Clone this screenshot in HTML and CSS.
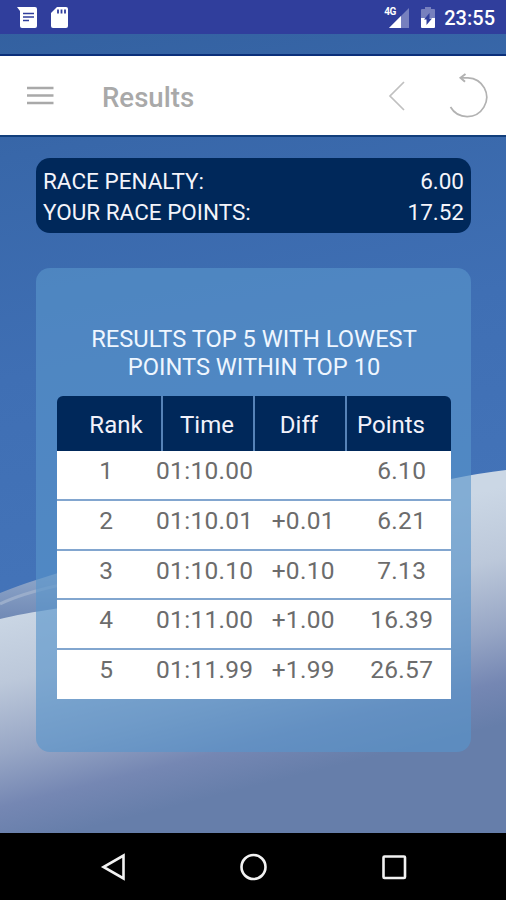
FILE: index.html
```html
<!DOCTYPE html>
<html lang="en">
<head>
  <meta charset="UTF-8">
  <meta name="viewport" content="width=device-width, initial-scale=1.0">
  <title>Results</title>
  <link rel="stylesheet" href="styles.css">
</head>
<body>
  <div class="screen">
    <!-- sky and snow -->
    <svg class="backdrop" viewBox="0 0 506 900" preserveAspectRatio="none">
      <defs>
        <linearGradient id="sky" x1="0" y1="0" x2="0.15" y2="1">
          <stop offset="0" stop-color="#325f9e"/>
          <stop offset=".25" stop-color="#3867a9"/>
          <stop offset=".6" stop-color="#3f6fb4"/>
          <stop offset="1" stop-color="#4474b9"/>
        </linearGradient>
        <linearGradient id="snow" gradientUnits="userSpaceOnUse" x1="0" y1="612" x2="56" y2="836">
          <stop offset="0" stop-color="#cbd7e5"/>
          <stop offset=".3" stop-color="#bcc8da"/>
          <stop offset=".6" stop-color="#97a6c5"/>
          <stop offset=".82" stop-color="#7587b3"/>
          <stop offset="1" stop-color="#667eaa"/>
        </linearGradient>
        <linearGradient id="ridge" x1="0" y1="0" x2="0" y2="1">
          <stop offset="0" stop-color="#93abcd"/>
          <stop offset="1" stop-color="#7089b5"/>
        </linearGradient>
      </defs>
      <rect width="506" height="620" fill="url(#sky)"/>
      <path d="M0 593 Q20 585 36 580 L80 566 V620 H0z" fill="url(#ridge)"/>
      <path d="M0 604 Q20 594 60 585" fill="none" stroke="#9aadcb" stroke-width="3"/>
      <path d="M0 619 Q20 614 60 608 Q300 510 451 479 Q480 473 506 470 V840 H0z" fill="url(#snow)"/>
    </svg>

    <div class="statusbar">
      <svg class="icon-message" width="20" height="21" viewBox="0 0 20 21">
        <path d="M0 0h18q2 0 2 2v17q0 2-2 2H5q-2 0-2-2V4z" fill="#fff"/>
        <path d="M6 6.5h11M6 10h11M6 13.5h6" stroke="#303e9c" stroke-width="1.5"/>
      </svg>
      <svg class="icon-sd" width="17" height="21" viewBox="0 0 17 21">
        <path d="M6 0h9q2 0 2 2v17q0 2-2 2H2q-2 0-2-2V6z" fill="#fff"/>
        <path d="M7 2.5v4M10.5 2.5v4M14 2.5v4" stroke="#303e9c" stroke-width="1.8"/>
      </svg>
      <div class="signal">
        <span class="network">4G</span>
        <svg width="20" height="20" viewBox="0 0 20 20">
          <path d="M20 0v20H0z" fill="#7780be"/>
          <path d="M12 8v12H0z" fill="#fff"/>
        </svg>
      </div>
      <svg class="icon-battery" width="14" height="21" viewBox="0 0 14 21">
        <path d="M4 0h6v2h3q1 0 1 1v8H0V3q0-1 1-1h3z" fill="#7780be"/>
        <path d="M0 11h14v9q0 1-1 1H1q-1 0-1-1z" fill="#fff"/>
        <path d="M8.5 6v5.5H11L5.5 18v-5.5H3z" fill="#303e9c"/>
      </svg>
      <span class="clock">23:55</span>
    </div>

    <header class="toolbar">
      <svg class="icon-menu" width="27" height="19" viewBox="0 0 27 19">
        <path d="M0 2h26.5M0 9.5h26.5M0 17h26.5" stroke="#a9a9a9" stroke-width="2.4"/>
      </svg>
      <h1>Results</h1>
      <svg class="icon-back" width="18" height="32" viewBox="0 0 18 32">
        <path d="M16 2L2 16l14 14" fill="none" stroke="#c0c0c0" stroke-width="1.7"/>
      </svg>
      <svg class="icon-reload" width="42" height="46" viewBox="0 0 42 46">
        <path d="M14 4.8H20A19.4 19.4 0 1 1 2.5 34" fill="none" stroke="#b2b2b2" stroke-width="1.7"/>
        <path d="M17.5 1l-5 3.8 4.5 4" fill="none" stroke="#b2b2b2" stroke-width="2"/>
      </svg>
    </header>

    <main>
      <div class="summary">
        <div class="line"><span>RACE PENALTY:</span><span>6.00</span></div>
        <div class="line"><span>YOUR RACE POINTS:</span><span>17.52</span></div>
      </div>

      <div class="card">
        <h2>RESULTS TOP 5 WITH LOWEST<br>POINTS WITHIN TOP 10</h2>
        <div class="table">
          <div class="head"><span>Rank</span><span>Time</span><span>Diff</span><span>Points</span></div>
          <div class="row"><span>1</span><span>01:10.00</span><span></span><span>6.10</span></div>
          <div class="row"><span>2</span><span>01:10.01</span><span>+0.01</span><span>6.21</span></div>
          <div class="row"><span>3</span><span>01:10.10</span><span>+0.10</span><span>7.13</span></div>
          <div class="row"><span>4</span><span>01:11.00</span><span>+1.00</span><span>16.39</span></div>
          <div class="row"><span>5</span><span>01:11.99</span><span>+1.99</span><span>26.57</span></div>
        </div>
      </div>
    </main>

    <nav class="navbar">
      <svg width="28" height="30" viewBox="0 0 28 30">
        <path d="M23.5 3.5v23L3.5 15z" fill="none" stroke="#f2f2f2" stroke-width="2.6"/>
      </svg>
      <svg width="28" height="30" viewBox="0 0 28 30">
        <circle cx="13.5" cy="15" r="12" fill="none" stroke="#f2f2f2" stroke-width="2.6"/>
      </svg>
      <svg width="28" height="30" viewBox="0 0 28 30">
        <rect x="3.5" y="4.5" width="21.5" height="21.5" rx="1" fill="none" stroke="#f2f2f2" stroke-width="2.6"/>
      </svg>
    </nav>
  </div>
</body>
</html>
```
FILE: styles.css
```css
* {
  box-sizing: border-box;
}

body {
  margin: 0;
  font-family: Roboto, "Liberation Sans", sans-serif;
}

svg {
  display: block;
  flex: none;
}

.screen {
  position: relative;
  display: flex;
  flex-direction: column;
  width: 506px;
  height: 900px;
  overflow: hidden;
}

.backdrop {
  position: absolute;
  inset: 0;
  width: 100%;
  height: 100%;
  z-index: -1;
}

/* Status bar */
.statusbar {
  display: flex;
  align-items: center;
  height: 34px;
  padding: 1px 11px 0 17px;
  background-color: #303e9c;
  color: #fff;
}

.icon-sd {
  margin-left: 14px;
}

.signal {
  position: relative;
  margin-left: auto;
}

.network {
  position: absolute;
  top: -2px;
  left: -5px;
  font-size: 10px;
  line-height: 11px;
  font-weight: 700;
  letter-spacing: -.5px;
}

.icon-battery {
  margin-left: 12px;
}

.clock {
  margin: 1px 0 0 9px;
  font-size: 20px;
  font-weight: 500;
}

/* Toolbar */
.toolbar {
  display: flex;
  align-items: center;
  height: 83px;
  margin-top: 20px;
  padding: 0 16px 0 27px;
  background-color: #fff;
  border-top: 2px solid #0b2f7a;
  border-bottom: 2px solid #123f7c;
}

.toolbar h1 {
  margin: 3px 0 0 48px;
  font-size: 27.6px;
  font-weight: 500;
  color: #a9a9a9;
}

.icon-back {
  margin-left: auto;
}

.icon-reload {
  margin: 1px 0 0 42px;
}

/* Content */
main {
  flex: 1;
  padding: 21px 35px 0 36px;
}

.summary {
  height: 75px;
  padding: 8px 7px 0;
  border-radius: 14px;
  background-color: #00285a;
  color: #f4f4fa;
  font-size: 22.5px;
  line-height: 30.5px;
}

.line {
  display: flex;
  justify-content: space-between;
}

.card {
  height: 484px;
  margin-top: 35px;
  padding: 58px 20px 0 21px;
  border-radius: 14px;
  background-color: rgba(88, 149, 203, .63);
}

.card h2 {
  margin: 0 0 15px;
  font-size: 23.7px;
  line-height: 27.5px;
  font-weight: 400;
  text-align: center;
  color: #eef6ff;
}

.head {
  display: grid;
  grid-template-columns: 104px 92px 92px 106px;
  height: 55px;
  border-radius: 6px 6px 0 0;
  overflow: hidden;
  background-color: #00285a;
  color: #f2f2fa;
  font-size: 24px;
  line-height: 58px;
  text-align: center;
}

.head span + span {
  border-left: 2px solid #5683b8;
  padding-right: 2px;
}

.head span:first-child {
  padding-left: 14px;
}

.head span:last-child {
  padding-right: 16px;
}

.row {
  display: grid;
  grid-template-columns: repeat(4, 1fr);
  height: 49.8px;
  background-color: #fff;
  border-bottom: 2px solid #82a6cf;
  color: #6c6c6c;
  font-size: 24.5px;
  line-height: 39px;
  letter-spacing: .3px;
  text-align: center;
}

.row:last-child {
  height: 48.8px;
  border-bottom: none;
}

/* Android buttons */
.navbar {
  display: flex;
  justify-content: space-between;
  height: 67px;
  padding: 19px 98px 0 100px;
  background-color: #000;
}
```
